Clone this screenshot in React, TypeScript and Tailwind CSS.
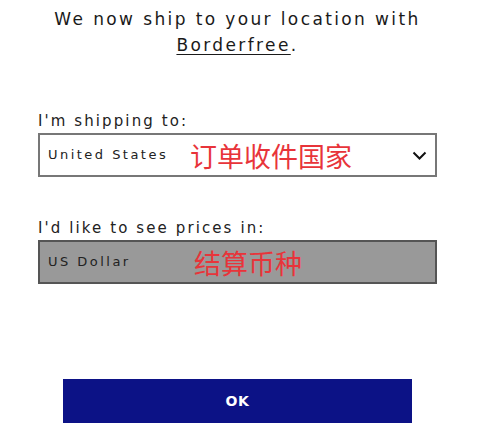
const font = { fontFamily: '"DejaVu Sans", "Liberation Sans", sans-serif' }

const Field = ({
  label,
  value,
  note,
  noteLeft,
  grey,
  select,
}: {
  label: string
  value: string
  note: string
  noteLeft: string
  grey?: boolean
  select?: boolean
}) => (
  <div className="flex flex-col">
    <div className="text-[15px] leading-[20px] tracking-[0.14em] text-[#222]">{label}</div>
    <div
      className={`relative mt-[2px] flex h-[44px] items-center border-2 px-[8px] ${
        grey ? 'border-[#555] bg-[#999]' : 'border-[#777] bg-white'
      }`}
    >
      <span className="text-[13px] tracking-[0.19em] text-[#222]">{value}</span>
      <span
        className={`absolute top-1/2 -translate-y-1/2 text-[27px] leading-none text-[#e8343a] ${noteLeft}`}
        style={{ fontFamily: '"Noto Sans CJK SC", sans-serif' }}
      >
        {note}
      </span>
      {select && (
        <svg className="ml-auto" width="15" height="9" viewBox="0 0 15 9" fill="none">
          <polyline points="1.5,1.5 7.5,7.5 13.5,1.5" stroke="#111" strokeWidth="2" />
        </svg>
      )}
    </div>
  </div>
)

export default function App() {
  return (
    <div className="h-[429px] w-[480px] bg-white" style={font}>
      <div className="ml-[38px] w-[399px] pt-[6px]">
        <h1 className="text-center text-[17px] leading-[26px] tracking-[0.14em] text-[#1a1a1a]">
          We now ship to your location with
          <br />
          <span className="underline decoration-1 underline-offset-[3px]">Borderfree</span>.
        </h1>

        <div className="mt-[53px] flex flex-col gap-[41px]">
          <Field
            label="I'm shipping to:"
            value="United States"
            note="订单收件国家"
            noteLeft="left-[150px]"
            select
          />
          <Field label="I'd like to see prices in:" value="US Dollar" note="结算币种" noteLeft="left-[154px]" grey />
        </div>

        <button className="mx-auto mt-[95px] flex h-[44px] w-[349px] items-center justify-center bg-[#0c1286] text-[14px] font-bold tracking-[0.05em] text-white">
          OK
        </button>
      </div>
    </div>
  )
}
